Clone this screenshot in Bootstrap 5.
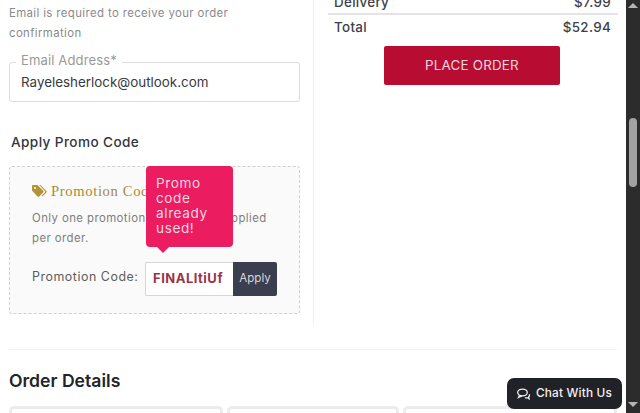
<!DOCTYPE html>
<html lang="en">
<head>
<meta charset="utf-8">
<title>Checkout</title>
<link href="https://cdn.jsdelivr.net/npm/bootstrap@5.3.0/dist/css/bootstrap.min.css" rel="stylesheet">
<style>
html,body{height:413px;overflow:hidden;background:#fff}
body{font-family:"Inter","Liberation Sans",sans-serif;color:#3b3d47}
.frame{height:413px;overflow:hidden}
.page{width:626px;flex:none;margin-top:-12px;padding:0 9px;position:relative}
.leftcol{width:305px;height:337px;border-right:1px solid #f1f1f1;padding-right:13px;flex:none}
.rightcol{width:304px;flex:none;padding:0 0 0 14px}
.note{font-size:11.4px;line-height:20px;color:#8a8a8a;letter-spacing:.38px;margin:15px 0 0;max-width:240px}
.emailbox{height:40px;border:1px solid #dcdcdc;border-radius:3px;margin-top:19px;padding:0 11px;position:relative;font-size:13.4px;letter-spacing:0;color:#383a42}
.emaillabel{position:absolute;left:6px;top:-12px;background:#fff;padding:0 5px;font-size:13px;line-height:18px;color:#999;letter-spacing:.15px}
.promohead{font-size:13.6px;font-weight:500;color:#33353d;margin:30px 0 0 2px;line-height:20px;letter-spacing:.4px}
.promobox{height:148px;margin-top:14px;border:1px dashed #d0d0d0;border-radius:3px;background:#fafafa;padding:14px 22px 0;position:relative}
.promotitle{font-family:"Liberation Serif",serif;font-size:14.6px;letter-spacing:.65px;color:#a48a38;line-height:20px;white-space:nowrap}
.promotext{font-size:11.4px;line-height:20px;color:#7d7d7d;letter-spacing:.42px;margin:7px 0 0}
.coderow{margin-top:14px}
.codelabel{font-size:12.4px;color:#5c5c5c;letter-spacing:.55px;width:113px;flex:none;margin-bottom:4px}
.codeinput{width:88px;height:34px;border:1px solid #d6d6d6;border-right:0;background:#fff;border-radius:2px 0 0 2px;font-size:13px;font-weight:700;color:#9c3346;letter-spacing:.5px;padding-left:7px}
.applybtn{width:44px;height:34px;background:#3b3e4f;color:#d6d7de;font-size:11.6px;border-radius:0 2px 2px 0}
.bubble{position:absolute;left:136px;top:-1px;width:87px;height:81px;background:#ec1c60;color:#f7d7e2;border-radius:4px;padding:10px 10px;font-size:13.6px;line-height:15px;letter-spacing:.6px}
.bubble::after{content:"";position:absolute;left:11px;bottom:-6px;border:6px solid transparent;border-bottom:0;border-top-color:#ec1c60}
.costrow{font-size:13.4px;font-weight:500;color:#3d3f49;letter-spacing:.3px;line-height:20px;padding:0 7px 0 6px}
.costrow.line{padding-top:4px;padding-bottom:0;border-bottom:2px solid #e4e4e4;height:27px}
.costrow.total{margin-top:2px}
.orderbtn{width:176px;height:39px;background:#b80c32;color:#f3d6dd;font-size:13.4px;border-radius:2px;margin:9px 0 0 56px;letter-spacing:.2px}
.rule{height:1px;background:#f3f3f3;margin-top:24px}
.orderhead{font-size:17.6px;font-weight:600;color:#232428;margin:20px 0 0;line-height:22px}
.cardrow{margin-top:14px;gap:4px}
.ghost{height:30px;border:3px solid #ececec;border-bottom:0;border-radius:5px 5px 0 0;flex:none}
.g1{width:214px}.g2{width:172px}.g3{width:214px}
.chat{position:absolute;left:507px;top:390px;width:115px;height:31px;background:#212227;color:#f2f2f2;border-radius:7px;font-size:11.8px;font-weight:500;letter-spacing:.2px;gap:6px}
.bar{width:14px;height:413px;background:#2c2c2c;flex:none;position:relative}
.thumb{position:absolute;left:3px;top:118px;width:8px;height:69px;background:#a2a2a2;border-radius:4px}
.up,.down{position:absolute;left:2px;width:0;height:0;border:5px solid transparent}
.up{top:3px;border-top:0;border-bottom-color:#b5b5b5}
.down{top:402px;border-bottom:0;border-top-color:#b5b5b5}
</style>
</head>
<body>
<div class="frame d-flex">
  <div class="page">
    <div class="d-flex">
      <div class="leftcol">
        <p class="note">Email is required to receive your order confirmation</p>
        <div class="emailbox d-flex align-items-center">
          <span class="emaillabel">Email Address*</span>
          <span>Rayelesherlock@outlook.com</span>
        </div>
        <div class="promohead">Apply Promo Code</div>
        <div class="promobox">
          <div class="promotitle d-flex align-items-center gap-1">
            <svg width="15" height="13" viewBox="0 0 15 13" aria-hidden="true"><path fill="#b3933a" d="M0 1.2C0 .5.5 0 1.2 0h4.2l5.8 5.8c.5.5.5 1.2 0 1.7l-4 4c-.5.5-1.200.5-1.700 0L0 5.600z"/><path fill="#b3933a" d="M7.200 0h1.300l5.900 5.900c.5.5.5 1.200 0 1.700l-4 4-.8-.8 3.900-4.100z"/><circle cx="3" cy="3" r="1" fill="#fafafa"/></svg>
            <span>Promotion Code</span>
          </div>
          <p class="promotext">Only one promotion code can be applied per order.</p>
          <div class="coderow d-flex align-items-center">
            <span class="codelabel">Promotion Code:</span>
            <div class="codeinput d-flex align-items-center">FINALItiUf</div>
            <div class="applybtn d-flex align-items-center justify-content-center">Apply</div>
          </div>
          <div class="bubble">Promo code already used!</div>
        </div>
      </div>
      <div class="rightcol">
        <div class="costrow line d-flex justify-content-between"><span>Delivery</span><span>$7.99</span></div>
        <div class="costrow total d-flex justify-content-between"><span>Total</span><span>$52.94</span></div>
        <div class="orderbtn d-flex align-items-center justify-content-center">PLACE ORDER</div>
      </div>
    </div>
    <div class="rule"></div>
    <div class="orderhead">Order Details</div>
    <div class="cardrow d-flex">
      <div class="ghost g1"></div>
      <div class="ghost g2"></div>
      <div class="ghost g3"></div>
    </div>
    <div class="chat d-flex align-items-center justify-content-center">
      <svg width="13" height="12" viewBox="0 0 13 12" fill="none" stroke="#f2f2f2" stroke-width="1.300" aria-hidden="true"><ellipse cx="5.500" cy="4.500" rx="4.800" ry="3.400"/><path d="M2.500 7.500 1.500 9.500 5 8"/><path d="M8 9.800c1.500.3 2.500 0 3 0l1 1-.3-2c.8-.8 1-1.600.6-2.500"/></svg>
      <span>Chat With Us</span>
    </div>
  </div>
  <div class="bar"><span class="up"></span><span class="thumb"></span><span class="down"></span></div>
</div>
</body>
</html>
